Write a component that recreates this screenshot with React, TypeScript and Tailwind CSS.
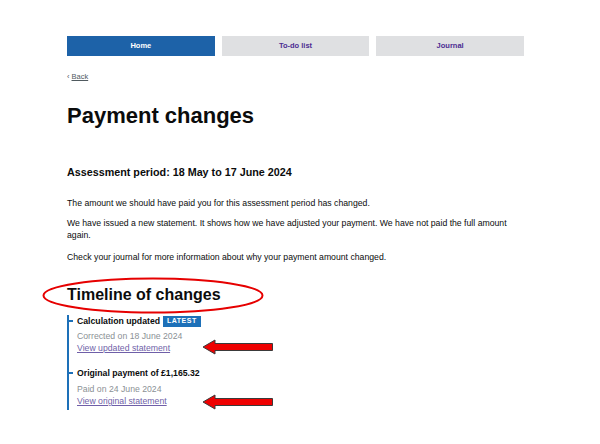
// GOV.UK-style "Payment changes" page with red annotation overlays.
const FONT = "font-['Liberation_Sans',Arial,sans-serif]";

function Arrow({ className }: { className: string }) {
  return (
    <svg className={className} width="72" height="16" viewBox="0 0 72 16">
      <polygon
        points="1,8 13,1 13,4.5 70.5,4.5 70.5,11.5 13,11.5 13,15"
        fill="#ee0000"
        stroke="#3a3a3a"
        strokeWidth="1"
        strokeLinejoin="miter"
      />
    </svg>
  );
}

function Tick() {
  return <span className="absolute left-[-10px] top-[5px] h-[2px] w-[6px] bg-[#1d70b8]" />;
}

export default function App() {
  return (
    <div className={`relative min-h-[444px] w-[600px] bg-white text-[#0b0c0c] ${FONT}`}>
      <div className="ml-[67px] w-[457px] pt-[36px]">
        <nav className="grid grid-cols-3 gap-[7px] text-[7.5px] font-bold">
          <a className="flex h-[20px] items-center justify-center bg-[#1d62a8] text-white">Home</a>
          <a className="flex h-[20px] items-center justify-center bg-[#dfe0e2] text-[#4c2c92]">To-do list</a>
          <a className="flex h-[20px] items-center justify-center bg-[#dfe0e2] text-[#4c2c92]">Journal</a>
        </nav>

        <div className="mt-[16px] flex items-center gap-[2px] text-[7.5px] leading-[10px] text-[#505a5f]">
          <span>‹</span>
          <span className="underline">Back</span>
        </div>

        <h1 className="mt-[22px] text-[22px] font-bold leading-[24px]">Payment changes</h1>

        <h2 className="mt-[37px] text-[10.75px] font-bold leading-[14px]">
          Assessment period: 18 May to 17 June 2024
        </h2>

        <div className="mt-[18px] text-[8.7px] leading-[12px]">
          <p>The amount we should have paid you for this assessment period has changed.</p>
          <p className="mt-[8px]">
            We have issued a new statement. It shows how we have adjusted your payment. We have not paid the full amount
            again.
          </p>
          <p className="mt-[10px]">Check your journal for more information about why your payment amount changed.</p>
        </div>

        <h2 className="mt-[22px] text-[16px] font-bold leading-[20px]">Timeline of changes</h2>

        <ol className="mt-[10px] ml-0 border-l-2 border-[#1d70b8] pb-[3px] pl-[8px] text-[8.7px] leading-[12px]">
          <li className="relative">
            <Tick />
            <div className="flex items-center gap-[3px] font-bold">
              <span>Calculation updated</span>
              <span className="flex h-[11px] items-center bg-[#1d70b8] px-[4px] text-[7px] tracking-[0.5px] text-white">
                LATEST
              </span>
            </div>
            <p className="mt-[3px] text-[#8b9195]">Corrected on 18 June 2024</p>
            <a className="text-[#6f5fa8] underline">View updated statement</a>
          </li>
          <li className="relative mt-[13px]">
            <Tick />
            <div className="font-bold">Original payment of £1,165.32</div>
            <p className="mt-[4px] text-[#8b9195]">Paid on 24 June 2024</p>
            <a className="text-[#6f5fa8] underline">View original statement</a>
          </li>
        </ol>
      </div>

      <svg className="absolute left-[42px] top-[277px]" width="222" height="37" viewBox="0 0 222 37">
        <ellipse cx="111" cy="18.5" rx="109.5" ry="17" fill="none" stroke="#e60000" strokeWidth="2" />
      </svg>
      <Arrow className="absolute left-[202px] top-[339px]" />
      <Arrow className="absolute left-[202px] top-[394px]" />
    </div>
  );
}
